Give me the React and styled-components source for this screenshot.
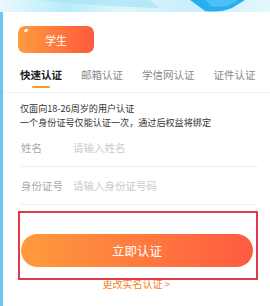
import React from 'react';
import styled, { createGlobalStyle } from 'styled-components';

const Global = createGlobalStyle`
  html, body {
    margin: 0;
    padding: 0;
    background: #fff;
  }
  body {
    font-family: "Noto Sans CJK SC", "Noto Sans", sans-serif;
  }
`;

const Page = styled.div`
  position: relative;
  width: 270px;
  height: 306px;
  overflow: hidden;
  background: linear-gradient(90deg, #6cc6f1 0px, #6cc6f1 3px, #fff 3px);
`;

const Banner = styled.div`
  position: relative;
  height: 12px;
  background: linear-gradient(100deg, #eaf9fd 0%, #b8ecf8 25%, #dff6fc 45%, #c9eefb 70%, #e4f7fd 100%);
  overflow: hidden;
`;

const Card = styled.div`
  margin-left: 3px;
  background: #fff;
  border-top-left-radius: 6px;
  padding: 14px 0 0 0;
  height: 280px;
`;

const Badge = styled.div`
  position: relative;
  margin-left: 15px;
  width: 76px;
  height: 27px;
  border-radius: 7px;
  background: linear-gradient(90deg, #ff9b3e, #ff5a3c);
  color: #fff;
  font-size: 11px;
  display: flex;
  align-items: center;
  justify-content: center;
`;

const Shine = styled.span`
  position: absolute;
  left: 6px;
  top: 3px;
  width: 4px;
  height: 3px;
  border-radius: 50%;
  background: rgba(255, 255, 255, 0.9);
  transform: rotate(-30deg);
`;

const Tabs = styled.div`
  display: flex;
  gap: 19px;
  padding: 15px 0 0 17px;
  border-bottom: 1px solid #f3f3f3;
  height: 24px;
`;

const Tab = styled.div`
  position: relative;
  font-size: 10.5px;
  line-height: 14px;
  color: ${p => (p.$active ? '#222' : '#8a8a8a')};
  font-weight: ${p => (p.$active ? 700 : 400)};
  white-space: nowrap;
`;

const Underline = styled.span`
  position: absolute;
  left: 50%;
  top: 18px;
  width: 18px;
  height: 2px;
  margin-left: -9px;
  border-radius: 1px;
  background: #f39a2b;
`;

const Notice = styled.div`
  padding: 8px 0 0 17px;
  font-size: 9.1px;
  line-height: 14px;
  color: #333;
`;

const Form = styled.div`
  padding: 0 12px 0 18px;
`;

const Row = styled.div`
  display: flex;
  align-items: center;
  height: 37px;
  border-bottom: 1px solid #efefef;
  font-size: 10.5px;
`;

const Label = styled.div`
  width: 52px;
  color: #a8a8a8;
`;

const Placeholder = styled.div`
  color: #cacaca;
`;

const Actions = styled.div`
  display: flex;
  flex-direction: column;
  align-items: center;
  padding-top: 29px;
`;

const Button = styled.div`
  width: 232px;
  height: 33px;
  border-radius: 17px;
  margin-left: 1px;
  background: linear-gradient(90deg, #ff9b3d, #ff5b40);
  color: #fff;
  font-size: 12.5px;
  display: flex;
  align-items: center;
  justify-content: center;
`;

const Link = styled.div`
  margin-top: 9px;
  font-size: 10px;
  color: #f5842c;
`;

const Highlight = styled.div`
  position: absolute;
  left: 18px;
  top: 211px;
  width: 236px;
  height: 65px;
  border: 2px solid #e0394a;
`;

export default function App() {
  return (
    <>
      <Global />
      <Page>
        <Banner>
          <svg width="270" height="12" viewBox="0 0 270 12" style={{ display: 'block' }}>
            <path d="M40 0 Q90 6 160 8 L150 0 Z" fill="#a6e4f6" opacity="0.7" />
            <path d="M190 0 L245 0 L232 8 Q220 13 205 11 Z" fill="#27aef0" />
            <path d="M205 0 L238 0 L228 6 L212 7 Z" fill="#4cc0f5" />
          </svg>
        </Banner>
        <Card>
          <Badge>
            <Shine />
            学生
          </Badge>
          <Tabs>
            <Tab $active>
              快速认证
              <Underline />
            </Tab>
            <Tab>邮箱认证</Tab>
            <Tab>学信网认证</Tab>
            <Tab>证件认证</Tab>
          </Tabs>
          <Notice>
            仅面向18-26周岁的用户认证
            <br />
            一个身份证号仅能认证一次，通过后权益将绑定
          </Notice>
          <Form>
            <Row>
              <Label>姓名</Label>
              <Placeholder>请输入姓名</Placeholder>
            </Row>
            <Row>
              <Label>身份证号</Label>
              <Placeholder>请输入身份证号码</Placeholder>
            </Row>
          </Form>
          <Actions>
            <Button>立即认证</Button>
            <Link>更改实名认证 &gt;</Link>
          </Actions>
        </Card>
        <Highlight />
      </Page>
    </>
  );
}
